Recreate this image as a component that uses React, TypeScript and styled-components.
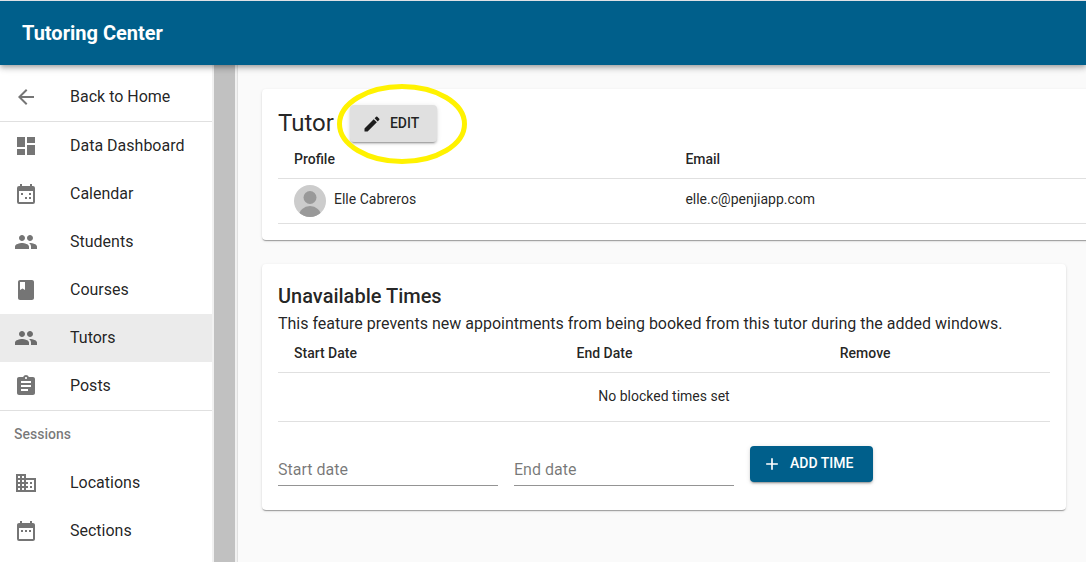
import React from 'react';
import styled, { createGlobalStyle } from 'styled-components';
import {
  MdArrowBack,
  MdDashboard,
  MdPeople,
  MdBook,
  MdAssignment,
  MdBusiness,
  MdDateRange,
  MdEdit,
  MdAdd,
} from 'react-icons/md';

const BLUE = '#005f8b';
const TEXT = 'rgba(0, 0, 0, 0.87)';
const MUTED = 'rgba(0, 0, 0, 0.54)';
const LINE = '#e0e0e0';

const GlobalStyle = createGlobalStyle`
  *, *::before, *::after { box-sizing: border-box; }
  body {
    margin: 0;
    background: #fafafa;
    color: ${TEXT};
    font-family: Roboto, "Liberation Sans", sans-serif;
    font-size: 16px;
    line-height: 24px;
    overflow-x: hidden;
  }
`;

const Page = styled.div`
  display: flex;
  flex-direction: column;
  min-height: 100vh;
`;

const Header = styled.header`
  position: relative;
  z-index: 2;
  display: flex;
  align-items: center;
  height: 65px;
  padding: 0 22px;
  border-top: 1px solid #dee1e6;
  background: ${BLUE};
  color: #fff;
  box-shadow: 0 2px 4px -1px rgba(0, 0, 0, 0.2), 0 4px 5px 0 rgba(0, 0, 0, 0.14),
    0 1px 10px 0 rgba(0, 0, 0, 0.12);
`;

const Brand = styled.h1`
  margin: 0;
  font-size: 20px;
  font-weight: 700;
  line-height: 32px;
`;

const Body = styled.div`
  display: flex;
  flex: 1;
`;

const Sidebar = styled.nav`
  flex: none;
  width: 212px;
  padding-top: 8px;
  background: #fff;
`;

const ScrollTrack = styled.div`
  flex: none;
  display: flex;
  width: 26px;
  padding: 0 2px;
  border-right: 1px solid ${LINE};
  background: #f1f1f1;
`;

const ScrollThumb = styled.div`
  flex: 1;
  background: #c1c1c1;
`;

const NavList = styled.ul`
  margin: 0;
  padding: 0;
  list-style: none;
  & + & {
    border-top: 1px solid ${LINE};
  }
`;

const NavLink = styled.a<{ $active?: boolean }>`
  display: flex;
  align-items: center;
  gap: 32px;
  height: 48px;
  padding: 0 14px;
  color: inherit;
  text-decoration: none;
  background: ${(p) => (p.$active ? '#ebebeb' : 'transparent')};
  svg {
    flex: none;
    width: 24px;
    height: 24px;
    color: ${MUTED};
  }
`;

const NavHeading = styled.li`
  padding: 0 14px 2px;
  color: ${MUTED};
  font-size: 14px;
  font-weight: 500;
  line-height: 46px;
`;

const Main = styled.main`
  display: flex;
  flex: 1;
  flex-direction: column;
  gap: 24px;
  min-width: 0;
  padding: 24px 20px 24px 24px;
  overflow: hidden;
`;

const Card = styled.section<{ $bleed?: boolean }>`
  margin-right: ${(p) => (p.$bleed ? '-52px' : '0')};
  padding: 16px;
  border-radius: 4px;
  background: #fff;
  box-shadow: 0 2px 1px -1px rgba(0, 0, 0, 0.2), 0 1px 1px 0 rgba(0, 0, 0, 0.14),
    0 1px 3px 0 rgba(0, 0, 0, 0.12);
`;

const TitleRow = styled.div`
  display: flex;
  align-items: center;
  gap: 16px;
`;

const Title = styled.h2`
  margin: 0;
  padding-bottom: 2px;
  font-size: 24px;
  font-weight: 400;
  line-height: 32px;
`;

const Subtitle = styled.h2`
  margin: 0;
  font-size: 20px;
  font-weight: 500;
  line-height: 32px;
`;

const Description = styled.p`
  margin: 0;
`;

const Button = styled.button<{ $primary?: boolean }>`
  display: inline-flex;
  align-items: center;
  gap: 8px;
  height: ${(p) => (p.$primary ? '36px' : '37px')};
  padding: 0 ${(p) => (p.$primary ? '20px' : '18px')} 0 12px;
  border: 0;
  border-radius: 4px;
  background: ${(p) => (p.$primary ? BLUE : '#e0e0e0')};
  color: ${(p) => (p.$primary ? '#fff' : TEXT)};
  font: 500 14px/22px Roboto, "Liberation Sans", sans-serif;
  text-transform: uppercase;
  cursor: pointer;
  box-shadow: 0 3px 1px -2px rgba(0, 0, 0, 0.2), 0 2px 2px 0 rgba(0, 0, 0, 0.14),
    0 1px 5px 0 rgba(0, 0, 0, 0.12);
  svg {
    width: 20px;
    height: 20px;
  }
`;

const ButtonLabel = styled.span`
  padding-bottom: 2px;
`;

const Highlighted = styled.div`
  position: relative;
  display: flex;
`;

const Ring = styled.svg`
  position: absolute;
  top: -21px;
  left: -13px;
  width: 130px;
  height: 80px;
  pointer-events: none;
`;

const Table = styled.table`
  width: 100%;
  border-collapse: separate;
  border-spacing: 0;
  table-layout: fixed;
  font-size: 14px;
`;

const HeadCell = styled.th<{ $width?: string }>`
  width: ${(p) => p.$width ?? 'auto'};
  padding: 5px 16px 7px;
  border-bottom: 1px solid ${LINE};
  font-weight: 500;
  text-align: left;
`;

const Cell = styled.td`
  padding: 6px 16px;
  border-bottom: 1px solid ${LINE};
  line-height: 28px;
  vertical-align: top;
`;

const EmptyCell = styled(Cell)`
  padding: 9px 16px 11px;
  text-align: center;
`;

const Person = styled.div`
  display: flex;
  gap: 8px;
`;

const Avatar = styled.svg`
  width: 32px;
  height: 32px;
  border-radius: 50%;
`;

const Form = styled.form`
  display: flex;
  flex-wrap: wrap;
  align-items: flex-start;
  gap: 16px;
  padding: 16px 0 8px;
`;

const DateInput = styled.input`
  width: 220px;
  height: 32px;
  margin-top: 16px;
  padding: 0;
  border: 0;
  border-bottom: 1px solid #949494;
  border-radius: 0;
  outline: 0;
  background: transparent;
  color: ${TEXT};
  font: 400 16px/24px Roboto, "Liberation Sans", sans-serif;
  &::placeholder {
    color: ${MUTED};
    opacity: 1;
  }
`;

const FormAction = styled.div`
  display: flex;
  padding-top: 8px;
`;

const CalendarIcon = () => (
  <svg viewBox="0 0 24 24" fill="currentColor" aria-hidden="true">
    <path d="M19 4h-1V2h-2v2H8V2H6v2H5a2 2 0 0 0-2 2v14a2 2 0 0 0 2 2h14a2 2 0 0 0 2-2V6a2 2 0 0 0-2-2zm0 16H5V9h14v11zM7 11h2v2H7zM15 11h2v2h-2zM11 15h2v2h-2zM15 15h2v2h-2z" />
  </svg>
);

const mainLinks = [
  { label: 'Data Dashboard', icon: <MdDashboard /> },
  { label: 'Calendar', icon: <CalendarIcon /> },
  { label: 'Students', icon: <MdPeople /> },
  { label: 'Courses', icon: <MdBook /> },
  { label: 'Tutors', icon: <MdPeople />, active: true },
  { label: 'Posts', icon: <MdAssignment /> },
];

const sessionLinks = [
  { label: 'Locations', icon: <MdBusiness /> },
  { label: 'Sections', icon: <MdDateRange /> },
];

type NavItemProps = { label: string; icon: React.ReactNode; active?: boolean };

const NavItem = ({ label, icon, active }: NavItemProps) => (
  <li>
    <NavLink href="#" $active={active} aria-current={active ? 'page' : undefined}>
      {icon}
      {label}
    </NavLink>
  </li>
);

export default function App() {
  return (
    <Page>
      <GlobalStyle />
      <Header>
        <Brand>Tutoring Center</Brand>
      </Header>
      <Body>
        <Sidebar>
          <NavList>
            <NavItem label="Back to Home" icon={<MdArrowBack />} />
          </NavList>
          <NavList>
            {mainLinks.map((link) => (
              <NavItem key={link.label} {...link} />
            ))}
          </NavList>
          <NavList>
            <NavHeading>Sessions</NavHeading>
            {sessionLinks.map((link) => (
              <NavItem key={link.label} {...link} />
            ))}
          </NavList>
        </Sidebar>
        <ScrollTrack aria-hidden="true">
          <ScrollThumb />
        </ScrollTrack>
        <Main>
          <Card $bleed>
            <TitleRow>
              <Title>Tutor</Title>
              <Highlighted>
                <Button type="button">
                  <MdEdit />
                  <ButtonLabel>Edit</ButtonLabel>
                </Button>
                <Ring viewBox="0 0 130 80" aria-hidden="true">
                  <ellipse cx="65" cy="40" rx="62.5" ry="37.5" fill="none" stroke="#fff200" strokeWidth="5" />
                </Ring>
              </Highlighted>
            </TitleRow>
            <Table>
              <thead>
                <tr>
                  <HeadCell $width="47.5%">Profile</HeadCell>
                  <HeadCell>Email</HeadCell>
                </tr>
              </thead>
              <tbody>
                <tr>
                  <Cell>
                    <Person>
                      <Avatar viewBox="0 0 32 32" aria-hidden="true">
                        <rect width="32" height="32" fill="#ccc" />
                        <circle cx="16" cy="12.5" r="6.5" fill="#999" />
                        <ellipse cx="16" cy="31" rx="11" ry="10" fill="#999" />
                      </Avatar>
                      Elle Cabreros
                    </Person>
                  </Cell>
                  <Cell>elle.c@penjiapp.com</Cell>
                </tr>
              </tbody>
            </Table>
          </Card>
          <Card>
            <Subtitle>Unavailable Times</Subtitle>
            <Description>
              This feature prevents new appointments from being booked from this tutor during the added windows.
            </Description>
            <Table>
              <thead>
                <tr>
                  <HeadCell $width="36.6%">Start Date</HeadCell>
                  <HeadCell $width="34.1%">End Date</HeadCell>
                  <HeadCell>Remove</HeadCell>
                </tr>
              </thead>
              <tbody>
                <tr>
                  <EmptyCell colSpan={3}>No blocked times set</EmptyCell>
                </tr>
              </tbody>
            </Table>
            <Form onSubmit={(e) => e.preventDefault()}>
              <DateInput type="text" placeholder="Start date" aria-label="Start date" />
              <DateInput type="text" placeholder="End date" aria-label="End date" />
              <FormAction>
                <Button type="submit" $primary>
                  <MdAdd />
                  <ButtonLabel>Add time</ButtonLabel>
                </Button>
              </FormAction>
            </Form>
          </Card>
        </Main>
      </Body>
    </Page>
  );
}
